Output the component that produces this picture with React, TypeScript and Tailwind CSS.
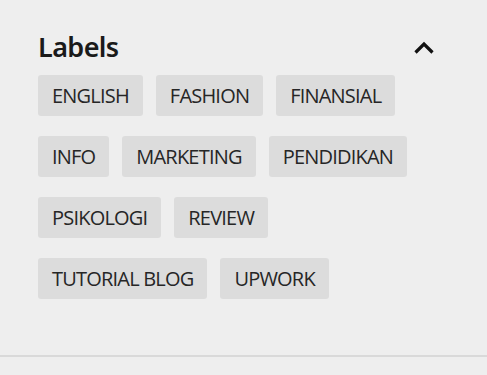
import React from "react";

const tags = [
  "ENGLISH",
  "FASHION",
  "FINANSIAL",
  "INFO",
  "MARKETING",
  "PENDIDIKAN",
  "PSIKOLOGI",
  "REVIEW",
  "TUTORIAL BLOG",
  "UPWORK",
];

export default function App() {
  return (
    <div className="w-[487px] h-[375px] bg-[#eeeeee] overflow-hidden">
      <div className="h-[357px] border-b-2 border-[#d9d9d9] pl-[38px] pr-[52px] pt-[30px]">
        <div className="flex items-center justify-between h-[34px]">
          <h2
            className="text-[27px] font-semibold text-[#1a1a1a] leading-[34px] tracking-[-0.6px]"
            style={{ fontFamily: '"Noto Sans", "Open Sans", sans-serif' }}
          >
            Labels
          </h2>
          <svg width="22" height="14" viewBox="0 0 22 14" className="mt-[2px]">
            <path d="M2.5 11.5 L11 3 L19.5 11.5" fill="none" stroke="#111" strokeWidth="3.2" />
          </svg>
        </div>
        <div
          className="mt-[11px] flex flex-wrap gap-x-[13px] gap-y-[20px] w-[380px]"
          style={{ fontFamily: '"Open Sans", "Noto Sans", sans-serif' }}
        >
          {tags.map((t) => (
            <span
              key={t}
              className="h-[41px] px-[14px] flex items-center rounded-[3px] bg-[#dcdcdc] text-[#262626] text-[20px] font-medium tracking-[-0.8px]"
            >
              {t}
            </span>
          ))}
        </div>
      </div>
    </div>
  );
}
